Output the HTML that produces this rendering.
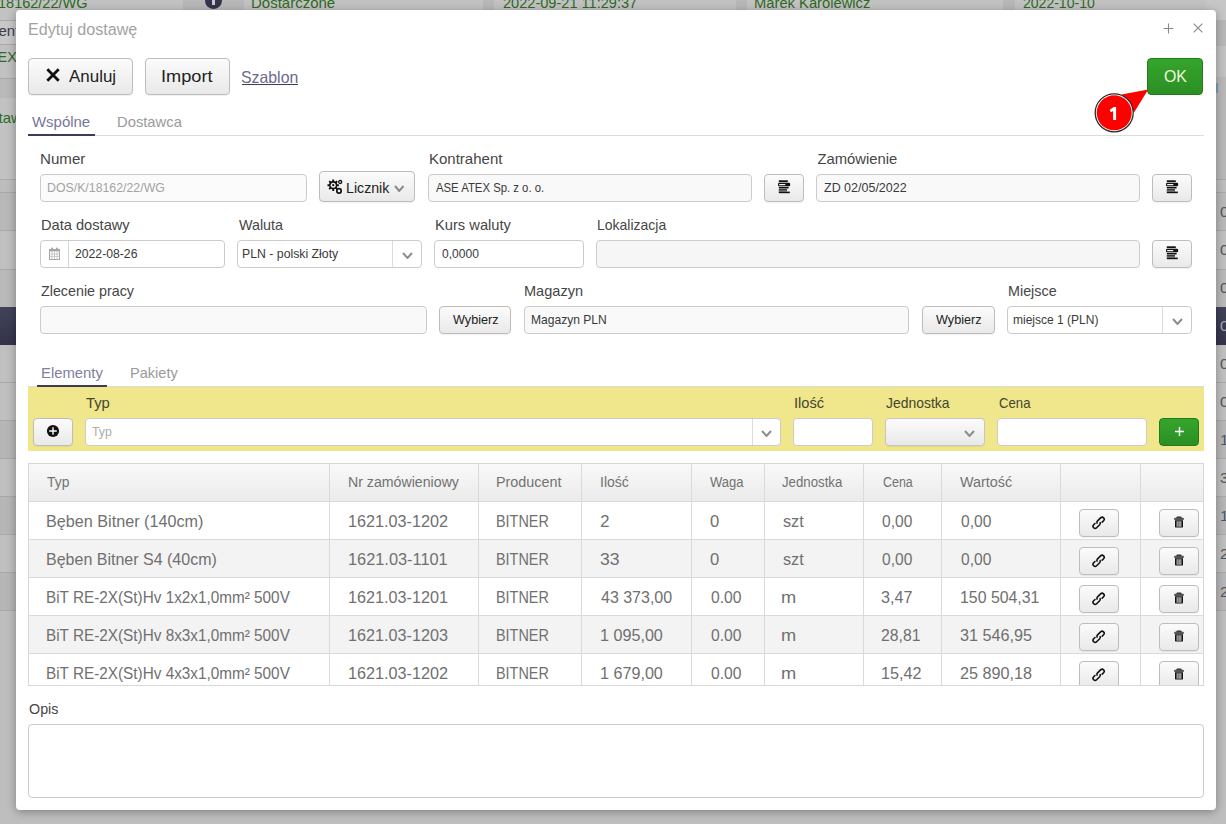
<!DOCTYPE html>
<html><head><meta charset="utf-8">
<style>
*{box-sizing:border-box;margin:0;padding:0}
html,body{width:1226px;height:824px;overflow:hidden}
body{position:relative;background:#bfbfbf;font-family:"Liberation Sans",sans-serif;color:#333}
.a{position:absolute}
.t{position:absolute;white-space:nowrap;line-height:1;transform-origin:0 0}
</style></head><body>

<div class="a" style="left:0;top:0;width:1226px;height:824px;background:#bfbfbf"></div>
<div class="a" style="left:0px;top:0px;width:1226px;height:20px;background:#c2c2c2"></div>
<div class="a" style="left:0px;top:20px;width:1226px;height:24px;background:#c8c8c8"></div>
<div class="a" style="left:0px;top:44px;width:1226px;height:34px;background:#c1c1c1"></div>
<div class="a" style="left:0px;top:78px;width:1226px;height:20px;background:#b9b9b9"></div>
<div class="a" style="left:0px;top:98px;width:1226px;height:81px;background:#c2c2c2"></div>
<div class="a" style="left:0px;top:179px;width:1226px;height:13px;background:#bdbdbd"></div>
<div class="a" style="left:0px;top:192px;width:1226px;height:38px;background:#b8b8b8"></div>
<div class="a" style="left:0px;top:230px;width:1226px;height:39px;background:#c0c0c0"></div>
<div class="a" style="left:0px;top:269px;width:1226px;height:38px;background:#b9b9b9"></div>
<div class="a" style="left:0px;top:307px;width:1226px;height:38px;background:#3a3a50;background:linear-gradient(#42425a,#33334a)"></div>
<div class="a" style="left:0px;top:345px;width:1226px;height:37px;background:#c0c0c0"></div>
<div class="a" style="left:0px;top:382px;width:1226px;height:38px;background:#bfbfbf"></div>
<div class="a" style="left:0px;top:420px;width:1226px;height:38px;background:#b6b6b6"></div>
<div class="a" style="left:0px;top:458px;width:1226px;height:38px;background:#bfbfbf"></div>
<div class="a" style="left:0px;top:496px;width:1226px;height:38px;background:#b6b6b6"></div>
<div class="a" style="left:0px;top:534px;width:1226px;height:38px;background:#bfbfbf"></div>
<div class="a" style="left:0px;top:572px;width:1226px;height:38px;background:#b6b6b6"></div>
<div class="a" style="left:0px;top:610px;width:1226px;height:214px;background:#bebebe"></div>
<div class="a" style="left:0px;top:20px;width:1226px;height:1px;background:#a9a9a9"></div>
<div class="a" style="left:0px;top:44px;width:1226px;height:1px;background:#a9a9a9"></div>
<div class="a" style="left:0px;top:78px;width:1226px;height:1px;background:#a9a9a9"></div>
<div class="a" style="left:0px;top:179px;width:1226px;height:1px;background:#a9a9a9"></div>
<div class="a" style="left:0px;top:192px;width:1226px;height:1px;background:#a9a9a9"></div>
<div class="a" style="left:0px;top:230px;width:1226px;height:1px;background:#a9a9a9"></div>
<div class="a" style="left:0px;top:269px;width:1226px;height:1px;background:#a9a9a9"></div>
<div class="a" style="left:0px;top:382px;width:1226px;height:1px;background:#a9a9a9"></div>
<div class="a" style="left:0px;top:420px;width:1226px;height:1px;background:#a9a9a9"></div>
<div class="a" style="left:0px;top:458px;width:1226px;height:1px;background:#a9a9a9"></div>
<div class="a" style="left:0px;top:496px;width:1226px;height:1px;background:#a9a9a9"></div>
<div class="a" style="left:0px;top:534px;width:1226px;height:1px;background:#a9a9a9"></div>
<div class="a" style="left:0px;top:572px;width:1226px;height:1px;background:#a9a9a9"></div>
<div class="a" style="left:0px;top:610px;width:1226px;height:1px;background:#a9a9a9"></div>
<div class="a" style="left:1206px;top:0px;width:20px;height:20px;background:#c6c6c6"></div>
<div class="a" style="left:1206px;top:20px;width:20px;height:26px;background:#b7b7b7"></div>
<div class="a" style="left:1206px;top:46px;width:20px;height:31px;background:#c2c2c2"></div>
<div class="a" style="left:1206px;top:77px;width:20px;height:102px;background:#b8b8b8"></div>
<div class="a" style="left:1216px;top:83px;width:1.5px;height:10px;background:#7aa0b0"></div>
<div class="a" style="left:183px;top:0px;width:61px;height:20px;background:#b8b8b8"></div>
<div class="a" style="left:483px;top:0px;width:11px;height:20px;background:#b8b8b8"></div>
<div class="a" style="left:736px;top:0px;width:11px;height:20px;background:#b8b8b8"></div>
<div class="a" style="left:1003px;top:0px;width:12px;height:20px;background:#b8b8b8"></div>
<div class="a" style="left:205px;top:-8px;width:16.5px;height:16.5px;border-radius:50%;background:#34344c"></div>
<div class="a" style="left:212px;top:0px;width:2.5px;height:5px;background:#c8c8d0"></div>
<div class="t" id="t0" style="left:-1.97px;top:-5.00px;font-size:15px;color:#2d6a1f;transform:scaleX(0.9670);">18162/22/WG</div>
<div class="t" id="t1" style="left:251.00px;top:-5.00px;font-size:15px;color:#2d6a1f;">Dostarczone</div>
<div class="t" id="t2" style="left:503.00px;top:-5.00px;font-size:15px;color:#2d6a1f;transform:scaleX(0.9710);">2022-09-21 11:29:37</div>
<div class="t" id="t3" style="left:754.02px;top:-5.00px;font-size:15px;color:#2d6a1f;transform:scaleX(0.9829);">Marek Karolewicz</div>
<div class="t" id="t4" style="left:1023.00px;top:-5.00px;font-size:15px;color:#2d6a1f;transform:scaleX(0.9351);">2022-10-10</div>
<div class="t" id="t5" style="left:-1.50px;top:23.00px;font-size:15px;color:#3c3c4c;">ent</div>
<div class="t" id="t6" style="left:-2.50px;top:50.00px;font-size:14.5px;color:#2d6a1f;">EX S</div>
<div class="t" id="t7" style="left:-1.50px;top:110.00px;font-size:15px;color:#2d6a1f;">taw</div>
<div class="t" id="t8" style="left:1220.00px;top:204.00px;font-size:15.5px;color:#505560;">0</div>
<div class="t" id="t9" style="left:1220.00px;top:242.00px;font-size:15.5px;color:#505560;">0</div>
<div class="t" id="t10" style="left:1220.00px;top:280.00px;font-size:15.5px;color:#505560;">0</div>
<div class="t" id="t11" style="left:1220.00px;top:318.00px;font-size:15.5px;color:#aaa;">0</div>
<div class="t" id="t12" style="left:1220.00px;top:356.00px;font-size:15.5px;color:#505560;">0</div>
<div class="t" id="t13" style="left:1220.00px;top:394.00px;font-size:15.5px;color:#505560;">0</div>
<div class="t" id="t14" style="left:1220.00px;top:432.00px;font-size:15.5px;color:#505560;">1</div>
<div class="t" id="t15" style="left:1220.00px;top:470.00px;font-size:15.5px;color:#505560;">3</div>
<div class="t" id="t16" style="left:1220.00px;top:508.00px;font-size:15.5px;color:#505560;">1</div>
<div class="t" id="t17" style="left:1220.00px;top:546.00px;font-size:15.5px;color:#505560;">2</div>
<div class="t" id="t18" style="left:1220.00px;top:584.00px;font-size:15.5px;color:#505560;">2</div>
<div class="a" style="left:16px;top:10px;width:1200px;height:800px;background:#fff;border-radius:4px;box-shadow:0 2px 10px rgba(0,0,0,.32)"></div>
<div class="t" id="t19" style="left:27.54px;top:22.00px;font-size:16.8px;color:#a2a2a2;transform:scaleX(0.9598);">Edytuj dostawę</div>
<svg class="a" style="left:1163px;top:23px" width="11" height="11"><path d="M5.5 0.5v10M0.5 5.5h10" stroke="#8a8a8a" stroke-width="1.1"/></svg>
<svg class="a" style="left:1192.5px;top:22.5px" width="10" height="10"><path d="M0.6 0.6l8.8 8.8M9.4 0.6l-8.8 8.8" stroke="#8a8a8a" stroke-width="1.1"/></svg>
<div class="a" style="left:28px;top:58px;width:105px;height:37px;border:1px solid #bdbdbd;border-radius:4px;background:linear-gradient(#fbfbfb,#e9e9e9);box-shadow:0 1px 1px rgba(0,0,0,.06)"></div>
<svg class="a" style="left:46px;top:68px" width="14" height="14"><path d="M1.3 1.3l11.4 11.4M12.7 1.3l-11.4 11.4" stroke="#111" stroke-width="2.8"/></svg>
<div class="t" id="t20" style="left:68.80px;top:68.00px;font-size:16.5px;color:#222;transform:scaleX(1.0267);">Anuluj</div>
<div class="a" style="left:145px;top:58px;width:85px;height:37px;border:1px solid #bdbdbd;border-radius:4px;background:linear-gradient(#fbfbfb,#e9e9e9);box-shadow:0 1px 1px rgba(0,0,0,.06)"></div>
<div class="t" id="t21" style="left:161.03px;top:68.00px;font-size:17px;color:#222;transform:scaleX(1.0702);">Import</div>
<div class="t" id="t22" style="left:241.04px;top:69.00px;font-size:16.5px;color:#6a6a8e;transform:scaleX(0.9603);">Szablon</div>
<div class="a" style="left:242px;top:84px;width:56px;height:1px;background:#3e3e5a"></div>
<div class="a" style="left:1147px;top:58px;width:56px;height:37px;border:1px solid #217a1c;border-radius:4px;background:linear-gradient(#35a52c,#2b8f24)"></div>
<div class="t" id="t23" style="left:1163.57px;top:68.00px;font-size:17px;color:#f2f7dc;transform:scaleX(0.9348);">OK</div>
<div class="a" style="left:28px;top:135px;width:1176px;height:1px;background:#dcdcdc"></div>
<div class="a" style="left:28px;top:134px;width:67px;height:2px;background:#3c3c5a"></div>
<div class="t" id="t24" style="left:32.20px;top:114.00px;font-size:15px;color:#76769a;transform:scaleX(0.9966);">Wspólne</div>
<div class="t" id="t25" style="left:117.32px;top:114.00px;font-size:15px;color:#9a9a9a;transform:scaleX(0.9846);">Dostawca</div>
<div class="t" id="t26" style="left:40.48px;top:152.00px;font-size:14.8px;color:#464646;transform:scaleX(1.0227);">Numer</div>
<div class="t" id="t27" style="left:428.79px;top:152.00px;font-size:14.8px;color:#464646;transform:scaleX(1.0139);">Kontrahent</div>
<div class="t" id="t28" style="left:817.40px;top:152.00px;font-size:14.8px;color:#464646;">Zamówienie</div>
<div class="a" style="left:40px;top:174px;width:267px;height:28px;border:1px solid #cbcbcb;border-radius:4px;background:#fbfbfb"></div>
<div class="t" id="t29" style="left:47.44px;top:182.00px;font-size:12.8px;color:#a3a3a3;transform:scaleX(0.9636);">DOS/K/18162/22/WG</div>
<div class="a" style="left:319px;top:171px;width:96px;height:31px;border:1px solid #bdbdbd;border-radius:4px;background:linear-gradient(#fbfbfb,#e9e9e9);box-shadow:0 1px 1px rgba(0,0,0,.06)"></div>
<svg class="a" style="left:326px;top:178px" width="17" height="17" viewBox="0 0 17 17">
<g stroke="#111" stroke-width="1.9"><path d="M7.2 1.5v11.4M1.5 7.2h11.4M3.2 3.2l8 8M11.2 3.2l-8 8"/></g>
<circle cx="7.2" cy="7.2" r="4.1" fill="#111"/><circle cx="7.2" cy="7.2" r="2.5" fill="#f2f2f2"/><circle cx="7.2" cy="7.2" r="1.1" fill="#111"/>
<circle cx="14.2" cy="4" r="1.5" fill="none" stroke="#111" stroke-width="1.3"/>
<circle cx="13" cy="12.9" r="2.2" fill="none" stroke="#111" stroke-width="1.7"/>
</svg>
<div class="t" id="t30" style="left:346.09px;top:180.00px;font-size:15.5px;color:#222;transform:scaleX(0.9149);">Licznik</div>
<svg class="a" style="left:393.95px;top:184.5px" width="10.5" height="7"><path d="M1 1L5.25 6L9.5 1" fill="none" stroke="#8a8a8a" stroke-width="2"/></svg>
<div class="a" style="left:428px;top:174px;width:324px;height:28px;border:1px solid #cbcbcb;border-radius:4px;background:#f9f9f9"></div>
<div class="t" id="t31" style="left:436.30px;top:182.00px;font-size:12.8px;color:#3a3a3a;transform:scaleX(0.8860);">ASE ATEX Sp. z o. o.</div>
<div class="a" style="left:764px;top:174px;width:40px;height:28px;border:1px solid #bdbdbd;border-radius:4px;background:linear-gradient(#fbfbfb,#e9e9e9);box-shadow:0 1px 1px rgba(0,0,0,.06)"></div>
<svg class="a" style="left:777.5px;top:180px" width="13" height="14" viewBox="0 0 13 14">
<rect x="0.8" y="0.3" width="9" height="1.8" fill="#111"/>
<rect x="0.6" y="3.4" width="11" height="2.4" rx="0.6" fill="none" stroke="#111" stroke-width="1.1"/>
<rect x="7.3" y="3.2" width="4.5" height="2.8" fill="#111"/>
<rect x="0.8" y="6.9" width="9.8" height="1.6" fill="#111"/>
<rect x="0.8" y="9.2" width="8.2" height="1.5" fill="#111"/>
<rect x="0.8" y="10.7" width="8.2" height="1" fill="#888"/>
<rect x="0.8" y="11.6" width="11" height="1.6" fill="#111"/>
</svg>
<div class="a" style="left:816px;top:174px;width:324px;height:28px;border:1px solid #cbcbcb;border-radius:4px;background:#f9f9f9"></div>
<div class="t" id="t32" style="left:824.00px;top:182.00px;font-size:12.8px;color:#3a3a3a;transform:scaleX(0.9762);">ZD 02/05/2022</div>
<div class="a" style="left:1152px;top:174px;width:40px;height:28px;border:1px solid #bdbdbd;border-radius:4px;background:linear-gradient(#fbfbfb,#e9e9e9);box-shadow:0 1px 1px rgba(0,0,0,.06)"></div>
<svg class="a" style="left:1166px;top:180px" width="13" height="14" viewBox="0 0 13 14">
<rect x="0.8" y="0.3" width="9" height="1.8" fill="#111"/>
<rect x="0.6" y="3.4" width="11" height="2.4" rx="0.6" fill="none" stroke="#111" stroke-width="1.1"/>
<rect x="7.3" y="3.2" width="4.5" height="2.8" fill="#111"/>
<rect x="0.8" y="6.9" width="9.8" height="1.6" fill="#111"/>
<rect x="0.8" y="9.2" width="8.2" height="1.5" fill="#111"/>
<rect x="0.8" y="10.7" width="8.2" height="1" fill="#888"/>
<rect x="0.8" y="11.6" width="11" height="1.6" fill="#111"/>
</svg>
<div class="t" id="t33" style="left:40.71px;top:218.00px;font-size:14.8px;color:#464646;transform:scaleX(0.9888);">Data dostawy</div>
<div class="t" id="t34" style="left:238.50px;top:218.00px;font-size:14.8px;color:#464646;transform:scaleX(0.9674);">Waluta</div>
<div class="t" id="t35" style="left:434.51px;top:218.00px;font-size:14.8px;color:#464646;transform:scaleX(0.9934);">Kurs waluty</div>
<div class="t" id="t36" style="left:596.65px;top:218.00px;font-size:14.8px;color:#464646;transform:scaleX(0.9452);">Lokalizacja</div>
<div class="a" style="left:40px;top:240px;width:185px;height:28px;border:1px solid #cbcbcb;border-radius:4px;background:#fff"></div>
<div class="a" style="left:68px;top:241px;width:1px;height:26px;background:#d6d6d6"></div>
<svg class="a" style="left:49px;top:247px" width="12" height="13" viewBox="0 0 12 13">
<rect x="0.5" y="2.5" width="10" height="10" fill="none" stroke="#a5a5a5" stroke-width="1"/>
<rect x="0.5" y="2" width="10" height="2.4" fill="#a5a5a5"/>
<rect x="2.2" y="0.6" width="1.8" height="2.6" rx="0.6" fill="#a5a5a5"/><rect x="7" y="0.6" width="1.8" height="2.6" rx="0.6" fill="#a5a5a5"/>
<path d="M3 4.4v8M5.5 4.4v8M8 4.4v8M0.5 6.9h10M0.5 9.4h10" stroke="#b8b8c4" stroke-width="0.7"/>
</svg>
<div class="t" id="t37" style="left:74.90px;top:248.00px;font-size:12.8px;color:#3a3a3a;transform:scaleX(0.9538);">2022-08-26</div>
<div class="a" style="left:237px;top:240px;width:185px;height:28px;border:1px solid #cbcbcb;border-radius:4px;background:#fff"></div>
<div class="a" style="left:392px;top:241px;width:1px;height:26px;background:#dcdcdc"></div>
<div class="t" id="t38" style="left:242.44px;top:248.00px;font-size:12.8px;color:#3a3a3a;transform:scaleX(0.9596);">PLN - polski Złoty</div>
<svg class="a" style="left:401.5px;top:251.5px" width="11" height="7"><path d="M1 1L5.5 6L10 1" fill="none" stroke="#8d8d8d" stroke-width="2"/></svg>
<div class="a" style="left:434px;top:240px;width:150px;height:28px;border:1px solid #cbcbcb;border-radius:4px;background:#fff"></div>
<div class="t" id="t39" style="left:442.20px;top:248.00px;font-size:12.8px;color:#3a3a3a;transform:scaleX(0.9436);">0,0000</div>
<div class="a" style="left:596px;top:240px;width:544px;height:28px;border:1px solid #cbcbcb;border-radius:4px;background:#f6f6f6"></div>
<div class="a" style="left:1152px;top:240px;width:40px;height:28px;border:1px solid #bdbdbd;border-radius:4px;background:linear-gradient(#fbfbfb,#e9e9e9);box-shadow:0 1px 1px rgba(0,0,0,.06)"></div>
<svg class="a" style="left:1166px;top:246px" width="13" height="14" viewBox="0 0 13 14">
<rect x="0.8" y="0.3" width="9" height="1.8" fill="#111"/>
<rect x="0.6" y="3.4" width="11" height="2.4" rx="0.6" fill="none" stroke="#111" stroke-width="1.1"/>
<rect x="7.3" y="3.2" width="4.5" height="2.8" fill="#111"/>
<rect x="0.8" y="6.9" width="9.8" height="1.6" fill="#111"/>
<rect x="0.8" y="9.2" width="8.2" height="1.5" fill="#111"/>
<rect x="0.8" y="10.7" width="8.2" height="1" fill="#888"/>
<rect x="0.8" y="11.6" width="11" height="1.6" fill="#111"/>
</svg>
<div class="t" id="t40" style="left:41.10px;top:284.00px;font-size:14.8px;color:#464646;transform:scaleX(0.9667);">Zlecenie pracy</div>
<div class="t" id="t41" style="left:524.02px;top:284.00px;font-size:14.8px;color:#464646;transform:scaleX(0.9828);">Magazyn</div>
<div class="t" id="t42" style="left:1007.83px;top:284.00px;font-size:14.8px;color:#464646;transform:scaleX(0.9694);">Miejsce</div>
<div class="a" style="left:40px;top:306px;width:387px;height:28px;border:1px solid #cbcbcb;border-radius:4px;background:#f9f9f9"></div>
<div class="a" style="left:439px;top:306px;width:72px;height:28px;border:1px solid #bdbdbd;border-radius:4px;background:linear-gradient(#fbfbfb,#e9e9e9);box-shadow:0 1px 1px rgba(0,0,0,.06)"></div>
<div class="t" id="t43" style="left:452.60px;top:313.00px;font-size:13px;color:#222;transform:scaleX(0.9717);">Wybierz</div>
<div class="a" style="left:524px;top:306px;width:385px;height:28px;border:1px solid #cbcbcb;border-radius:4px;background:#f9f9f9"></div>
<div class="t" id="t44" style="left:530.96px;top:314.00px;font-size:12.8px;color:#3a3a3a;transform:scaleX(0.9430);">Magazyn PLN</div>
<div class="a" style="left:922px;top:306px;width:73px;height:28px;border:1px solid #bdbdbd;border-radius:4px;background:linear-gradient(#fbfbfb,#e9e9e9);box-shadow:0 1px 1px rgba(0,0,0,.06)"></div>
<div class="t" id="t45" style="left:935.50px;top:313.00px;font-size:13px;color:#222;transform:scaleX(0.9717);">Wybierz</div>
<div class="a" style="left:1007px;top:306px;width:185px;height:28px;border:1px solid #cbcbcb;border-radius:4px;background:#fff"></div>
<div class="a" style="left:1162px;top:307px;width:1px;height:26px;background:#dcdcdc"></div>
<div class="t" id="t46" style="left:1012.56px;top:314.00px;font-size:12.8px;color:#3a3a3a;transform:scaleX(0.9389);">miejsce 1 (PLN)</div>
<svg class="a" style="left:1171.5px;top:317.5px" width="11" height="7"><path d="M1 1L5.5 6L10 1" fill="none" stroke="#8d8d8d" stroke-width="2"/></svg>
<div class="a" style="left:28px;top:386px;width:1176px;height:1px;background:#dcdcdc"></div>
<div class="a" style="left:37px;top:385px;width:70px;height:2px;background:#3c3c5a"></div>
<div class="t" id="t47" style="left:40.51px;top:365.00px;font-size:15px;color:#80809e;transform:scaleX(0.9903);">Elementy</div>
<div class="t" id="t48" style="left:129.93px;top:365.00px;font-size:15px;color:#9a9a9a;transform:scaleX(0.9708);">Pakiety</div>
<div class="a" style="left:28px;top:387px;width:1176px;height:64px;background:#f0e68c"></div>
<div class="a" style="left:33px;top:418px;width:40px;height:28px;border:1px solid #bdbdbd;border-radius:4px;background:linear-gradient(#fbfbfb,#e9e9e9);box-shadow:0 1px 1px rgba(0,0,0,.06)"></div>
<svg class="a" style="left:46px;top:424px" width="14" height="14"><circle cx="7" cy="7" r="6.1" fill="#111"/><path d="M7 3.2v7.6M3.2 7h7.6" stroke="#fff" stroke-width="1.4"/></svg>
<div class="t" id="t49" style="left:86.00px;top:396.00px;font-size:14.8px;color:#45452f;">Typ</div>
<div class="t" id="t50" style="left:793.71px;top:396.00px;font-size:14.8px;color:#45452f;transform:scaleX(0.9897);">Ilość</div>
<div class="t" id="t51" style="left:885.70px;top:396.00px;font-size:14.8px;color:#45452f;transform:scaleX(0.9412);">Jednostka</div>
<div class="t" id="t52" style="left:998.60px;top:396.00px;font-size:14.8px;color:#45452f;transform:scaleX(0.8889);">Cena</div>
<div class="a" style="left:85px;top:418px;width:696px;height:28px;border:1px solid #cbcbcb;border-radius:4px;background:#fff"></div>
<div class="a" style="left:752px;top:419px;width:1px;height:26px;background:#dcdcdc"></div>
<div class="t" id="t53" style="left:91.80px;top:426.00px;font-size:12.8px;color:#acacac;transform:scaleX(0.9600);">Typ</div>
<svg class="a" style="left:761.0px;top:429.5px" width="11" height="7"><path d="M1 1L5.5 6L10 1" fill="none" stroke="#8d8d8d" stroke-width="2"/></svg>
<div class="a" style="left:793px;top:418px;width:80px;height:28px;border:1px solid #cbcbcb;border-radius:4px;background:#fff"></div>
<div class="a" style="left:885px;top:418px;width:100px;height:28px;border:1px solid #bdbdbd;border-radius:4px;background:linear-gradient(#fbfbfb,#e9e9e9);box-shadow:0 1px 1px rgba(0,0,0,.06);border-color:#c6c6c6"></div>
<svg class="a" style="left:963.5px;top:429.5px" width="11" height="7"><path d="M1 1L5.5 6L10 1" fill="none" stroke="#8d8d8d" stroke-width="2"/></svg>
<div class="a" style="left:997px;top:418px;width:150px;height:28px;border:1px solid #cbcbcb;border-radius:4px;background:#fff"></div>
<div class="a" style="left:1159px;top:418px;width:40px;height:28px;border:1px solid #217a1c;border-radius:4px;background:linear-gradient(#35a52c,#2b8f24)"></div>
<svg class="a" style="left:1173.5px;top:425.5px" width="11" height="11"><path d="M5.5 1v9M1 5.5h9" stroke="#fff" stroke-width="1.5"/></svg>
<div class="a" style="left:28px;top:463px;width:1176px;height:223px;overflow:hidden;border:1px solid #d8d8d8;background:#fff">
<div class="a" style="left:0;top:0;width:1176px;height:38px;background:linear-gradient(#f9f9f9,#ebebeb);border-bottom:1px solid #d8d8d8"></div>
<div class="a" style="left:0;top:75px;width:1176px;height:1px;background:#dadada"></div>
<div class="a" style="left:0;top:76px;width:1176px;height:37px;background:#f3f3f3"></div>
<div class="a" style="left:0;top:113px;width:1176px;height:1px;background:#dadada"></div>
<div class="a" style="left:0;top:151px;width:1176px;height:1px;background:#dadada"></div>
<div class="a" style="left:0;top:152px;width:1176px;height:37px;background:#f3f3f3"></div>
<div class="a" style="left:0;top:189px;width:1176px;height:1px;background:#dadada"></div>
<div class="a" style="left:0;top:227px;width:1176px;height:1px;background:#dadada"></div>
<div class="a" style="left:300px;top:0;width:1px;height:230px;background:#dadada"></div>
<div class="a" style="left:449px;top:0;width:1px;height:230px;background:#dadada"></div>
<div class="a" style="left:552px;top:0;width:1px;height:230px;background:#dadada"></div>
<div class="a" style="left:662px;top:0;width:1px;height:230px;background:#dadada"></div>
<div class="a" style="left:735px;top:0;width:1px;height:230px;background:#dadada"></div>
<div class="a" style="left:834px;top:0;width:1px;height:230px;background:#dadada"></div>
<div class="a" style="left:912px;top:0;width:1px;height:230px;background:#dadada"></div>
<div class="a" style="left:1031px;top:0;width:1px;height:230px;background:#dadada"></div>
<div class="a" style="left:1111px;top:0;width:1px;height:230px;background:#dadada"></div>
</div>
<div class="a" style="left:29px;top:464px;width:1174px;height:221px;overflow:hidden">
<div class="t" id="t54" style="left:18.20px;top:10.00px;font-size:15.2px;color:#727272;transform:scaleX(0.9125);">Typ</div>
<div class="t" id="t55" style="left:318.77px;top:10.00px;font-size:15.2px;color:#727272;transform:scaleX(0.9322);">Nr zamówieniowy</div>
<div class="t" id="t56" style="left:467.26px;top:10.00px;font-size:15.2px;color:#727272;transform:scaleX(0.9441);">Producent</div>
<div class="t" id="t57" style="left:570.68px;top:10.00px;font-size:15.2px;color:#727272;transform:scaleX(0.9233);">Ilość</div>
<div class="t" id="t58" style="left:681.30px;top:10.00px;font-size:15.2px;color:#727272;transform:scaleX(0.8575);">Waga</div>
<div class="t" id="t59" style="left:753.40px;top:10.00px;font-size:15.2px;color:#727272;transform:scaleX(0.8714);">Jednostka</div>
<div class="t" id="t60" style="left:853.70px;top:10.00px;font-size:15.2px;color:#727272;transform:scaleX(0.8189);">Cena</div>
<div class="t" id="t61" style="left:930.70px;top:10.00px;font-size:15.2px;color:#727272;transform:scaleX(0.9455);">Wartość</div>
<div class="t" id="t62" style="left:17.23px;top:50.00px;font-size:16.6px;color:#707070;transform:scaleX(0.9750);">Bęben Bitner (140cm)</div>
<div class="t" id="t63" style="left:318.72px;top:50.00px;font-size:16.6px;color:#707070;transform:scaleX(0.9752);">1621.03-1202</div>
<div class="t" id="t64" style="left:467.33px;top:50.00px;font-size:16.6px;color:#707070;transform:scaleX(0.8678);">BITNER</div>
<div class="t" id="t65" style="left:571.20px;top:50.00px;font-size:16.6px;color:#707070;">2</div>
<div class="t" id="t66" style="left:681.00px;top:50.00px;font-size:16.6px;color:#707070;">0</div>
<div class="t" id="t67" style="left:753.50px;top:50.00px;font-size:16.6px;color:#707070;transform:scaleX(0.9762);">szt</div>
<div class="t" id="t68" style="left:853.20px;top:50.00px;font-size:16.6px;color:#707070;transform:scaleX(0.9375);">0,00</div>
<div class="t" id="t69" style="left:931.50px;top:50.00px;font-size:16.6px;color:#707070;transform:scaleX(0.9375);">0,00</div>
<div class="t" id="t70" style="left:17.24px;top:88.00px;font-size:16.6px;color:#707070;transform:scaleX(0.9646);">Bęben Bitner S4 (40cm)</div>
<div class="t" id="t71" style="left:318.71px;top:88.00px;font-size:16.6px;color:#707070;transform:scaleX(0.9850);">1621.03-1101</div>
<div class="t" id="t72" style="left:467.33px;top:88.00px;font-size:16.6px;color:#707070;transform:scaleX(0.8678);">BITNER</div>
<div class="t" id="t73" style="left:570.64px;top:88.00px;font-size:16.6px;color:#707070;transform:scaleX(1.0588);">33</div>
<div class="t" id="t74" style="left:681.00px;top:88.00px;font-size:16.6px;color:#707070;">0</div>
<div class="t" id="t75" style="left:753.50px;top:88.00px;font-size:16.6px;color:#707070;transform:scaleX(0.9762);">szt</div>
<div class="t" id="t76" style="left:853.20px;top:88.00px;font-size:16.6px;color:#707070;transform:scaleX(0.9375);">0,00</div>
<div class="t" id="t77" style="left:931.50px;top:88.00px;font-size:16.6px;color:#707070;transform:scaleX(0.9375);">0,00</div>
<div class="t" id="t78" style="left:17.28px;top:126.00px;font-size:16.6px;color:#707070;transform:scaleX(0.9224);">BiT RE-2X(St)Hv 1x2x1,0mm² 500V</div>
<div class="t" id="t79" style="left:318.72px;top:126.00px;font-size:16.6px;color:#707070;transform:scaleX(0.9752);">1621.03-1201</div>
<div class="t" id="t80" style="left:467.33px;top:126.00px;font-size:16.6px;color:#707070;transform:scaleX(0.8678);">BITNER</div>
<div class="t" id="t81" style="left:571.70px;top:126.00px;font-size:16.6px;color:#707070;transform:scaleX(0.9630);">43 373,00</div>
<div class="t" id="t82" style="left:681.50px;top:126.00px;font-size:16.6px;color:#707070;transform:scaleX(0.9437);">0.00</div>
<div class="t" id="t83" style="left:752.40px;top:126.00px;font-size:16.6px;color:#707070;transform:scaleX(1.1000);">m</div>
<div class="t" id="t84" style="left:852.23px;top:126.00px;font-size:16.6px;color:#707070;transform:scaleX(0.9742);">3,47</div>
<div class="t" id="t85" style="left:930.54px;top:126.00px;font-size:16.6px;color:#707070;transform:scaleX(0.9561);">150 504,31</div>
<div class="t" id="t86" style="left:17.28px;top:164.00px;font-size:16.6px;color:#707070;transform:scaleX(0.9224);">BiT RE-2X(St)Hv 8x3x1,0mm² 500V</div>
<div class="t" id="t87" style="left:318.72px;top:164.00px;font-size:16.6px;color:#707070;transform:scaleX(0.9752);">1621.03-1203</div>
<div class="t" id="t88" style="left:467.33px;top:164.00px;font-size:16.6px;color:#707070;transform:scaleX(0.8678);">BITNER</div>
<div class="t" id="t89" style="left:570.73px;top:164.00px;font-size:16.6px;color:#707070;transform:scaleX(0.9730);">1 095,00</div>
<div class="t" id="t90" style="left:681.50px;top:164.00px;font-size:16.6px;color:#707070;transform:scaleX(0.9437);">0.00</div>
<div class="t" id="t91" style="left:752.40px;top:164.00px;font-size:16.6px;color:#707070;transform:scaleX(1.1000);">m</div>
<div class="t" id="t92" style="left:852.25px;top:164.00px;font-size:16.6px;color:#707070;transform:scaleX(0.9500);">28,81</div>
<div class="t" id="t93" style="left:930.52px;top:164.00px;font-size:16.6px;color:#707070;transform:scaleX(0.9764);">31 546,95</div>
<div class="t" id="t94" style="left:17.28px;top:202.00px;font-size:16.6px;color:#707070;transform:scaleX(0.9224);">BiT RE-2X(St)Hv 4x3x1,0mm² 500V</div>
<div class="t" id="t95" style="left:318.72px;top:202.00px;font-size:16.6px;color:#707070;transform:scaleX(0.9752);">1621.03-1202</div>
<div class="t" id="t96" style="left:467.33px;top:202.00px;font-size:16.6px;color:#707070;transform:scaleX(0.8678);">BITNER</div>
<div class="t" id="t97" style="left:570.73px;top:202.00px;font-size:16.6px;color:#707070;transform:scaleX(0.9730);">1 679,00</div>
<div class="t" id="t98" style="left:681.50px;top:202.00px;font-size:16.6px;color:#707070;transform:scaleX(0.9437);">0.00</div>
<div class="t" id="t99" style="left:752.40px;top:202.00px;font-size:16.6px;color:#707070;transform:scaleX(1.1000);">m</div>
<div class="t" id="t100" style="left:852.23px;top:202.00px;font-size:16.6px;color:#707070;transform:scaleX(0.9750);">15,42</div>
<div class="t" id="t101" style="left:930.52px;top:202.00px;font-size:16.6px;color:#707070;transform:scaleX(0.9764);">25 890,18</div>
<div class="a" style="left:1050px;top:45px;width:40px;height:28px;border:1px solid #bdbdbd;border-radius:4px;background:linear-gradient(#fbfbfb,#e9e9e9);box-shadow:0 1px 1px rgba(0,0,0,.06)"></div>
<div class="a" style="left:1130px;top:45px;width:40px;height:28px;border:1px solid #bdbdbd;border-radius:4px;background:linear-gradient(#fbfbfb,#e9e9e9);box-shadow:0 1px 1px rgba(0,0,0,.06)"></div>
<svg class="a" style="left:1062px;top:52px" width="16" height="16" viewBox="0 0 16 16">
<g transform="translate(7.6 6.8) rotate(-45)" fill="none" stroke="#111" stroke-width="1.55" stroke-linecap="round">
<path d="M3.0 2.1 L4.9 2.1 A2.1 2.1 0 0 0 4.9 -2.1 L0.6 -2.1 A2.1 2.1 0 0 0 -1.3 -0.9"/>
<path d="M-3.0 -2.1 L-4.9 -2.1 A2.1 2.1 0 0 0 -4.9 2.1 L-0.6 2.1 A2.1 2.1 0 0 0 1.3 0.9"/>
</g></svg>
<svg class="a" style="left:1144.5px;top:52px" width="10" height="12" viewBox="0 0 10 12">
<path d="M3 0.6h4l1 1.4H2z" fill="#333"/>
<rect x="0.2" y="1.8" width="9.6" height="2.2" rx="0.6" fill="#555"/>
<path d="M1 4.2h8v6.2a1.2 1.2 0 0 1-1.2 1.2H2.2A1.2 1.2 0 0 1 1 10.4z" fill="#111"/>
<rect x="2.6" y="5.2" width="1.1" height="5.6" fill="#ccc"/>
<rect x="4.5" y="5.2" width="1.1" height="5.6" fill="#eee"/>
<rect x="6.3" y="5.2" width="1.1" height="5.6" fill="#ccc"/>
</svg>
<div class="a" style="left:1050px;top:83px;width:40px;height:28px;border:1px solid #bdbdbd;border-radius:4px;background:linear-gradient(#fbfbfb,#e9e9e9);box-shadow:0 1px 1px rgba(0,0,0,.06)"></div>
<div class="a" style="left:1130px;top:83px;width:40px;height:28px;border:1px solid #bdbdbd;border-radius:4px;background:linear-gradient(#fbfbfb,#e9e9e9);box-shadow:0 1px 1px rgba(0,0,0,.06)"></div>
<svg class="a" style="left:1062px;top:90px" width="16" height="16" viewBox="0 0 16 16">
<g transform="translate(7.6 6.8) rotate(-45)" fill="none" stroke="#111" stroke-width="1.55" stroke-linecap="round">
<path d="M3.0 2.1 L4.9 2.1 A2.1 2.1 0 0 0 4.9 -2.1 L0.6 -2.1 A2.1 2.1 0 0 0 -1.3 -0.9"/>
<path d="M-3.0 -2.1 L-4.9 -2.1 A2.1 2.1 0 0 0 -4.9 2.1 L-0.6 2.1 A2.1 2.1 0 0 0 1.3 0.9"/>
</g></svg>
<svg class="a" style="left:1144.5px;top:90px" width="10" height="12" viewBox="0 0 10 12">
<path d="M3 0.6h4l1 1.4H2z" fill="#333"/>
<rect x="0.2" y="1.8" width="9.6" height="2.2" rx="0.6" fill="#555"/>
<path d="M1 4.2h8v6.2a1.2 1.2 0 0 1-1.2 1.2H2.2A1.2 1.2 0 0 1 1 10.4z" fill="#111"/>
<rect x="2.6" y="5.2" width="1.1" height="5.6" fill="#ccc"/>
<rect x="4.5" y="5.2" width="1.1" height="5.6" fill="#eee"/>
<rect x="6.3" y="5.2" width="1.1" height="5.6" fill="#ccc"/>
</svg>
<div class="a" style="left:1050px;top:121px;width:40px;height:28px;border:1px solid #bdbdbd;border-radius:4px;background:linear-gradient(#fbfbfb,#e9e9e9);box-shadow:0 1px 1px rgba(0,0,0,.06)"></div>
<div class="a" style="left:1130px;top:121px;width:40px;height:28px;border:1px solid #bdbdbd;border-radius:4px;background:linear-gradient(#fbfbfb,#e9e9e9);box-shadow:0 1px 1px rgba(0,0,0,.06)"></div>
<svg class="a" style="left:1062px;top:128px" width="16" height="16" viewBox="0 0 16 16">
<g transform="translate(7.6 6.8) rotate(-45)" fill="none" stroke="#111" stroke-width="1.55" stroke-linecap="round">
<path d="M3.0 2.1 L4.9 2.1 A2.1 2.1 0 0 0 4.9 -2.1 L0.6 -2.1 A2.1 2.1 0 0 0 -1.3 -0.9"/>
<path d="M-3.0 -2.1 L-4.9 -2.1 A2.1 2.1 0 0 0 -4.9 2.1 L-0.6 2.1 A2.1 2.1 0 0 0 1.3 0.9"/>
</g></svg>
<svg class="a" style="left:1144.5px;top:128px" width="10" height="12" viewBox="0 0 10 12">
<path d="M3 0.6h4l1 1.4H2z" fill="#333"/>
<rect x="0.2" y="1.8" width="9.6" height="2.2" rx="0.6" fill="#555"/>
<path d="M1 4.2h8v6.2a1.2 1.2 0 0 1-1.2 1.2H2.2A1.2 1.2 0 0 1 1 10.4z" fill="#111"/>
<rect x="2.6" y="5.2" width="1.1" height="5.6" fill="#ccc"/>
<rect x="4.5" y="5.2" width="1.1" height="5.6" fill="#eee"/>
<rect x="6.3" y="5.2" width="1.1" height="5.6" fill="#ccc"/>
</svg>
<div class="a" style="left:1050px;top:159px;width:40px;height:28px;border:1px solid #bdbdbd;border-radius:4px;background:linear-gradient(#fbfbfb,#e9e9e9);box-shadow:0 1px 1px rgba(0,0,0,.06)"></div>
<div class="a" style="left:1130px;top:159px;width:40px;height:28px;border:1px solid #bdbdbd;border-radius:4px;background:linear-gradient(#fbfbfb,#e9e9e9);box-shadow:0 1px 1px rgba(0,0,0,.06)"></div>
<svg class="a" style="left:1062px;top:166px" width="16" height="16" viewBox="0 0 16 16">
<g transform="translate(7.6 6.8) rotate(-45)" fill="none" stroke="#111" stroke-width="1.55" stroke-linecap="round">
<path d="M3.0 2.1 L4.9 2.1 A2.1 2.1 0 0 0 4.9 -2.1 L0.6 -2.1 A2.1 2.1 0 0 0 -1.3 -0.9"/>
<path d="M-3.0 -2.1 L-4.9 -2.1 A2.1 2.1 0 0 0 -4.9 2.1 L-0.6 2.1 A2.1 2.1 0 0 0 1.3 0.9"/>
</g></svg>
<svg class="a" style="left:1144.5px;top:166px" width="10" height="12" viewBox="0 0 10 12">
<path d="M3 0.6h4l1 1.4H2z" fill="#333"/>
<rect x="0.2" y="1.8" width="9.6" height="2.2" rx="0.6" fill="#555"/>
<path d="M1 4.2h8v6.2a1.2 1.2 0 0 1-1.2 1.2H2.2A1.2 1.2 0 0 1 1 10.4z" fill="#111"/>
<rect x="2.6" y="5.2" width="1.1" height="5.6" fill="#ccc"/>
<rect x="4.5" y="5.2" width="1.1" height="5.6" fill="#eee"/>
<rect x="6.3" y="5.2" width="1.1" height="5.6" fill="#ccc"/>
</svg>
<div class="a" style="left:1050px;top:197px;width:40px;height:28px;border:1px solid #bdbdbd;border-radius:4px;background:linear-gradient(#fbfbfb,#e9e9e9);box-shadow:0 1px 1px rgba(0,0,0,.06)"></div>
<div class="a" style="left:1130px;top:197px;width:40px;height:28px;border:1px solid #bdbdbd;border-radius:4px;background:linear-gradient(#fbfbfb,#e9e9e9);box-shadow:0 1px 1px rgba(0,0,0,.06)"></div>
<svg class="a" style="left:1062px;top:204px" width="16" height="16" viewBox="0 0 16 16">
<g transform="translate(7.6 6.8) rotate(-45)" fill="none" stroke="#111" stroke-width="1.55" stroke-linecap="round">
<path d="M3.0 2.1 L4.9 2.1 A2.1 2.1 0 0 0 4.9 -2.1 L0.6 -2.1 A2.1 2.1 0 0 0 -1.3 -0.9"/>
<path d="M-3.0 -2.1 L-4.9 -2.1 A2.1 2.1 0 0 0 -4.9 2.1 L-0.6 2.1 A2.1 2.1 0 0 0 1.3 0.9"/>
</g></svg>
<svg class="a" style="left:1144.5px;top:204px" width="10" height="12" viewBox="0 0 10 12">
<path d="M3 0.6h4l1 1.4H2z" fill="#333"/>
<rect x="0.2" y="1.8" width="9.6" height="2.2" rx="0.6" fill="#555"/>
<path d="M1 4.2h8v6.2a1.2 1.2 0 0 1-1.2 1.2H2.2A1.2 1.2 0 0 1 1 10.4z" fill="#111"/>
<rect x="2.6" y="5.2" width="1.1" height="5.6" fill="#ccc"/>
<rect x="4.5" y="5.2" width="1.1" height="5.6" fill="#eee"/>
<rect x="6.3" y="5.2" width="1.1" height="5.6" fill="#ccc"/>
</svg>
</div>
<div class="t" id="t102" style="left:29.30px;top:702.00px;font-size:14.8px;color:#464646;transform:scaleX(0.9667);">Opis</div>
<div class="a" style="left:28px;top:724px;width:1176px;height:74px;border:1px solid #cbcbcb;border-radius:4px;background:#fff"></div>
<svg class="a" style="left:1090px;top:85px" width="64" height="52" viewBox="1090 85 64 52">
<path d="M1121.5 94.6 L1148.2 89.6 L1134 112.5 Z" fill="#ff0000"/>
<circle cx="1114.2" cy="112.8" r="19" fill="#fff" stroke="#2a2a2a" stroke-width="1.3"/>
<circle cx="1114.2" cy="112.8" r="17.5" fill="#ff0000"/>
<path d="M1113.6 107.1 L1116.1 107.1 L1116.1 119.9 L1113.1 119.9 L1113.1 110.9 L1110.9 112.2 L1109.7 109.9 Z" fill="#fff"/>
</svg>
</body></html>
